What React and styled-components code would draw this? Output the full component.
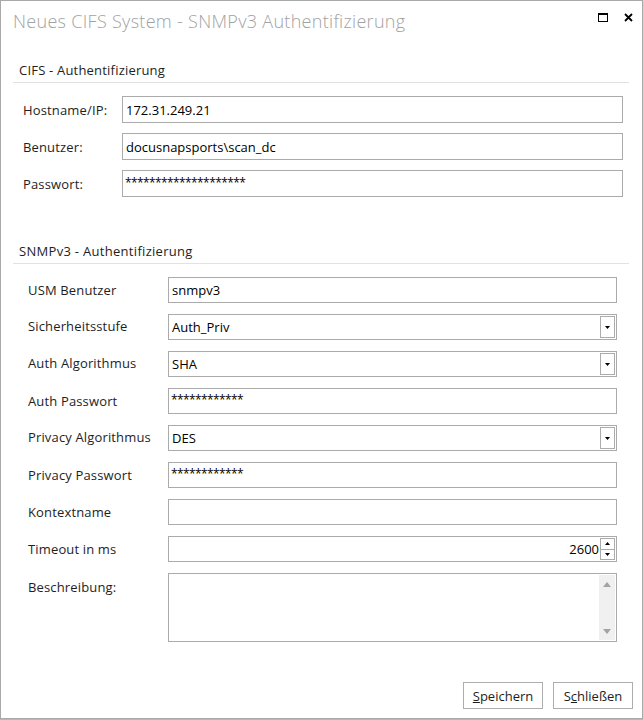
import React from "react";
import styled, { createGlobalStyle } from "styled-components";

const GlobalStyle = createGlobalStyle`
  html, body {
    margin: 0;
    padding: 0;
  }
  body {
    background: #bdb8ad;
    font-family: "Open Sans", "Noto Sans", sans-serif;
  }
`;

const Window = styled.div`
  box-sizing: border-box;
  width: 643px;
  height: 719px;
  background: #ffffff;
  border: 1px solid #a9a9a9;
  display: flex;
  flex-direction: column;
`;

const TitleBar = styled.div`
  height: 39px;
  display: flex;
  align-items: center;
  justify-content: space-between;
  padding: 0 9px 0 12px;
`;

const Title = styled.div`
  font-size: 18px;
  font-weight: 300;
  letter-spacing: 0.3px;
  color: #a2a2a2;
  white-space: nowrap;
`;

const Controls = styled.div`
  display: flex;
  align-items: center;
  gap: 16px;
  padding-bottom: 6px;
`;

const Section = styled.div`
  margin: ${(p) => p.$top}px 13px 0 12px;
`;

const SectionHead = styled.div`
  height: 24px;
  line-height: 24px;
  padding-left: 6px;
  font-size: 13px;
  letter-spacing: ${(p) => p.$spacing}px;
  color: #1e1e1e;
  border-bottom: 1px solid #e2e2e2;
`;

const Form = styled.div`
  display: grid;
  grid-template-columns: ${(p) => p.$labelWidth}px 1fr;
  row-gap: ${(p) => p.$gap}px;
  align-items: center;
  padding: 13px ${(p) => p.$right}px 0 ${(p) => p.$left}px;
`;

const Label = styled.div`
  font-size: 13px;
  letter-spacing: 0.15px;
  color: #1e1e1e;
  white-space: nowrap;
  align-self: ${(p) => (p.$top ? "start" : "center")};
  padding-top: ${(p) => (p.$top ? 5 : 0)}px;
  margin-top: ${(p) => (p.$raised ? -3 : 0)}px;
`;

const Field = styled.div`
  box-sizing: border-box;
  height: ${(p) => p.$h}px;
  border: 1px solid #ababab;
  background: #fff;
  display: flex;
  align-items: center;
  padding-left: ${(p) => p.$pad}px;
  font-size: 13px;
  color: #000;
`;

const Value = styled.span`
  flex: 1;
  white-space: nowrap;
  text-align: ${(p) => (p.$right ? "right" : "left")};
  padding-right: ${(p) => (p.$right ? 1 : 0)}px;
`;

const Stars = styled.span`
  font-size: 12px;
  letter-spacing: -0.6px;
  margin-top: -3px;
`;

const DropButton = styled.div`
  box-sizing: border-box;
  width: 15px;
  height: 22px;
  margin-right: 1px;
  border: 1px solid #acacac;
  background: #fff;
  display: flex;
  align-items: center;
  justify-content: center;
`;

const Spinner = styled.div`
  box-sizing: border-box;
  width: 15px;
  height: 22px;
  margin-right: 1px;
  border: 1px solid #acacac;
  display: flex;
  flex-direction: column;
`;

const SpinHalf = styled.div`
  flex: 1;
  display: flex;
  align-items: center;
  justify-content: center;
  border-top: ${(p) => (p.$lower ? "1px solid #acacac" : "none")};
`;

const TextArea = styled.div`
  box-sizing: border-box;
  height: 69px;
  border: 1px solid #ababab;
  display: flex;
  justify-content: flex-end;
  padding: 1px 1px 1px 0;
`;

const ScrollBar = styled.div`
  width: 16px;
  background: #f0f0f0;
  display: flex;
  flex-direction: column;
  justify-content: space-between;
  align-items: center;
  padding: 7px 0 6px;
`;

const Footer = styled.div`
  margin-top: auto;
  display: flex;
  justify-content: flex-end;
  gap: 10px;
  padding: 0 9px 9px 0;
`;

const Button = styled.div`
  box-sizing: border-box;
  width: 80px;
  height: 27px;
  border: 1px solid #adadad;
  background: #fff;
  display: flex;
  align-items: center;
  justify-content: center;
  font-size: 13px;
  color: #1e1e1e;
`;

const Arrow = ({ up, color = "#000", w = 5, h = 3 }) => (
  <svg width={w} height={h} viewBox={`0 0 ${w} ${h}`}>
    <polygon
      points={up ? `0,${h} ${w / 2},0 ${w},${h}` : `0,0 ${w},0 ${w / 2},${h}`}
      fill={color}
    />
  </svg>
);

const MaximizeIcon = () => (
  <svg width="10" height="9" viewBox="0 0 10 9">
    <rect x="0.5" y="0.5" width="9" height="8" fill="none" stroke="#000" />
    <rect x="0" y="0" width="10" height="2" fill="#000" />
  </svg>
);

const CloseIcon = () => (
  <svg width="9" height="9" viewBox="0 0 9 9">
    <path d="M1 1 L8 8 M8 1 L1 8" stroke="#000" strokeWidth="1.8" />
  </svg>
);

const Dropdown = ({ value }) => (
  <Field $h={26} $pad={3}>
    <Value>{value}</Value>
    <DropButton>
      <Arrow />
    </DropButton>
  </Field>
);

export default function App() {
  return (
    <>
      <GlobalStyle />
      <Window>
        <TitleBar>
          <Title>Neues CIFS System - SNMPv3 Authentifizierung</Title>
          <Controls>
            <MaximizeIcon />
            <CloseIcon />
          </Controls>
        </TitleBar>

        <Section $top={18}>
          <SectionHead $spacing={0.2}>CIFS - Authentifizierung</SectionHead>
          <Form $labelWidth={99} $gap={10} $left={10} $right={6}>
            <Label>Hostname/IP:</Label>
            <Field $h={27} $pad={3}>
              <Value>172.31.249.21</Value>
            </Field>
            <Label>Benutzer:</Label>
            <Field $h={27} $pad={3}>
              <Value>docusnapsports\scan_dc</Value>
            </Field>
            <Label>Passwort:</Label>
            <Field $h={27} $pad={2}>
              <Stars>********************</Stars>
            </Field>
          </Form>
        </Section>

        <Section $top={42}>
          <SectionHead $spacing={0.3}>SNMPv3 - Authentifizierung</SectionHead>
          <Form $labelWidth={140} $gap={11} $left={15} $right={12}>
            <Label>USM Benutzer</Label>
            <Field $h={26} $pad={3}>
              <Value>snmpv3</Value>
            </Field>
            <Label $raised>Sicherheitsstufe</Label>
            <Dropdown value="Auth_Priv" />
            <Label $raised>Auth Algorithmus</Label>
            <Dropdown value="SHA" />
            <Label>Auth Passwort</Label>
            <Field $h={26} $pad={2}>
              <Stars>************</Stars>
            </Field>
            <Label $raised>Privacy Algorithmus</Label>
            <Dropdown value="DES" />
            <Label>Privacy Passwort</Label>
            <Field $h={26} $pad={2}>
              <Stars>************</Stars>
            </Field>
            <Label>Kontextname</Label>
            <Field $h={26} $pad={3} />
            <Label>Timeout in ms</Label>
            <Field $h={26} $pad={3}>
              <Value $right>2600</Value>
              <Spinner>
                <SpinHalf>
                  <Arrow up />
                </SpinHalf>
                <SpinHalf $lower>
                  <Arrow />
                </SpinHalf>
              </Spinner>
            </Field>
            <Label $top>Beschreibung:</Label>
            <TextArea>
              <ScrollBar>
                <Arrow up color="#a3a3a3" w={8} h={5} />
                <Arrow color="#a3a3a3" w={8} h={5} />
              </ScrollBar>
            </TextArea>
          </Form>
        </Section>

        <Footer>
          <Button>
            <span>
              <u>S</u>peichern
            </span>
          </Button>
          <Button>
            <span>
              S<u>c</u>hließen
            </span>
          </Button>
        </Footer>
      </Window>
    </>
  );
}
